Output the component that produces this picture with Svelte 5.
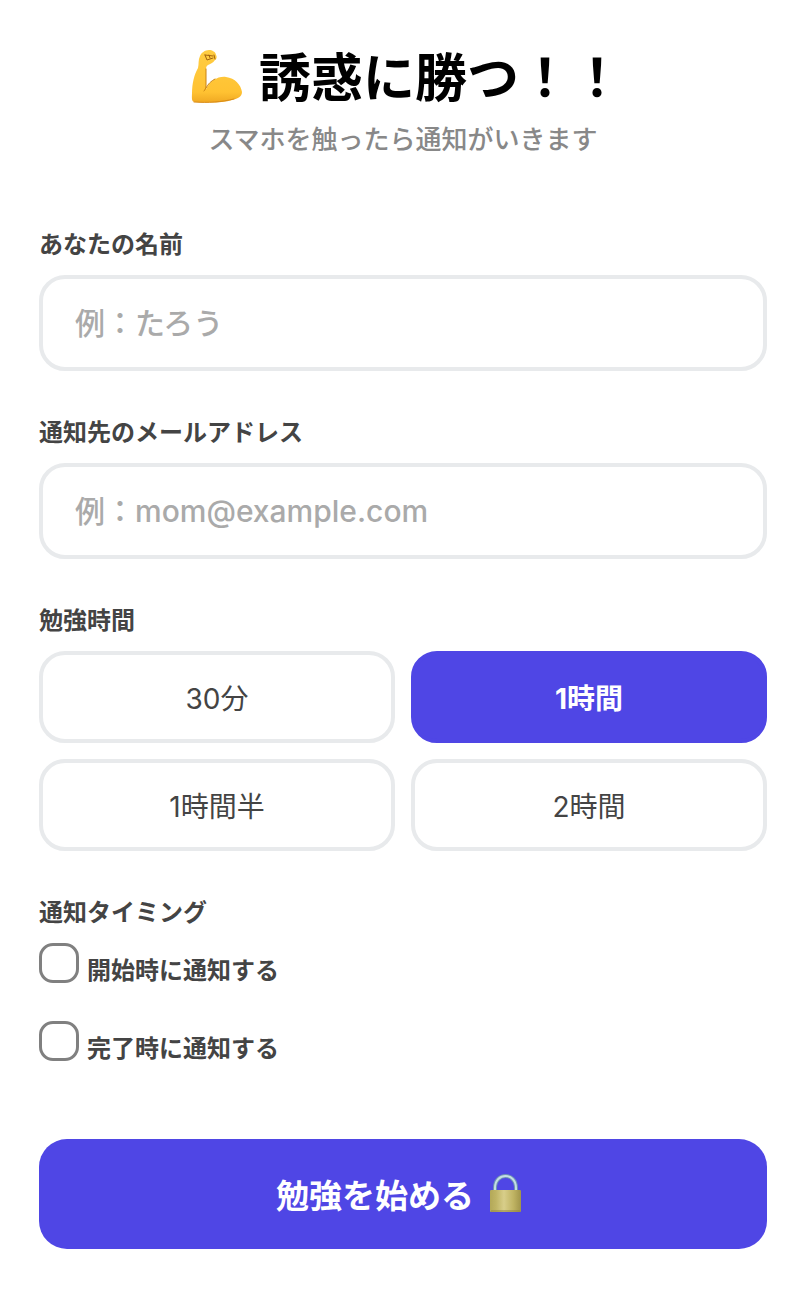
<script lang="ts">
  const durations = [
    { minutes: 30, label: "30分" },
    { minutes: 60, label: "1時間" },
    { minutes: 90, label: "1時間半" },
    { minutes: 120, label: "2時間" },
  ];

  let name = $state("");
  let email = $state("");
  let selected = $state(60);
  let notifyStart = $state(false);
  let notifyEnd = $state(false);
</script>

<main class="page">
  <header class="header">
    <h1 class="title">
      <svg class="muscle" viewBox="-7 2 60 56" aria-hidden="true">
        <defs>
          <linearGradient id="skin" x1="0" y1="0" x2="0" y2="1">
            <stop offset="0" stop-color="#ffcd42" />
            <stop offset="0.8" stop-color="#ffc232" />
            <stop offset="1" stop-color="#f0a822" />
          </linearGradient>
        </defs>
        <path
          d="M10 7 C11 4 15 1 19 1 C22 1 26 3 26 6 C27 7 27 10 25 11 C23 14 20 15 18 16 C16 17 16 19 16 22 L16 40 C20 32 28 27 36 28 C45 29 51 36 52 43 C52 48 47 50 42 51 C33 54 18 54 5 53 C1 53 2 48 2 44 C2 35 4 26 8 19 C9 15 8 11 10 7 Z"
          fill="url(#skin)"
        />
        <path
          d="M16 20 L16 37 C16 39 15 41 14 42 M16 39 C18 35 21 32 25 30"
          fill="none"
          stroke="#c98212"
          stroke-width="1"
          stroke-linecap="round"
        />
        <path
          d="M15 6 L23 7 M15 6 L17 11 L23 9 M19 6 L20 9 M24 6 L25 10"
          fill="none"
          stroke="#a3650f"
          stroke-width="1"
          stroke-linejoin="round"
          stroke-linecap="round"
        />
        <path
          d="M4 53 C18 54 32 53 44 50"
          fill="none"
          stroke="#d98c18"
          stroke-width="1"
          stroke-linecap="round"
        />
      </svg>
      <span>誘惑に勝つ！！</span>
    </h1>
    <p class="subtitle">スマホを触ったら通知がいきます</p>
  </header>

  <form class="form" onsubmit={(e) => e.preventDefault()}>
    <div class="group">
      <label class="label" for="name">あなたの名前</label>
      <input id="name" class="text-input" type="text" placeholder="例：たろう" bind:value={name} />
    </div>

    <div class="group">
      <label class="label" for="email">通知先のメールアドレス</label>
      <input
        id="email"
        class="text-input"
        type="email"
        placeholder="例：mom@example.com"
        bind:value={email}
      />
    </div>

    <div class="group" role="group" aria-labelledby="duration-label">
      <span class="label" id="duration-label">勉強時間</span>
      <div class="durations">
        {#each durations as d (d.minutes)}
          <button
            type="button"
            class="duration"
            class:selected={selected === d.minutes}
            aria-pressed={selected === d.minutes}
            onclick={() => (selected = d.minutes)}
          >
            {d.label}
          </button>
        {/each}
      </div>
    </div>

    <div class="group" role="group" aria-labelledby="timing-label">
      <span class="label" id="timing-label">通知タイミング</span>
      <div class="checks">
        <label class="check">
          <input type="checkbox" bind:checked={notifyStart} />
          <span>開始時に通知する</span>
        </label>
        <label class="check">
          <input type="checkbox" bind:checked={notifyEnd} />
          <span>完了時に通知する</span>
        </label>
      </div>
    </div>

    <button type="submit" class="submit">
      <span>勉強を始める</span>
      <svg class="lock" viewBox="0 0 42 40" aria-hidden="true">
        <defs>
          <linearGradient id="brass" x1="0" y1="0" x2="1" y2="0">
            <stop offset="0" stop-color="#b3a858" />
            <stop offset="0.2" stop-color="#c0b565" />
            <stop offset="0.45" stop-color="#d8ce8a" />
            <stop offset="0.75" stop-color="#c0b463" />
            <stop offset="1" stop-color="#a0944a" />
          </linearGradient>
        </defs>
        <path d="M7 18 V14 C7 -2 28 -2 28 14 V18" fill="none" stroke="#6e93b4" stroke-width="4" />
        <path d="M7 18 V14 C7 -2 28 -2 28 14 V18" fill="none" stroke="#c3dde4" stroke-width="2" />
        <rect x="2" y="16" width="31" height="22" rx="1" fill="url(#brass)" />
        <path d="M3 37 H32" stroke="#8d8242" stroke-width="1" />
      </svg>
    </button>
  </form>
</main>

<style>
  :global(body) {
    margin: 0;
    background: #fff;
  }

  .page {
    box-sizing: border-box;
    padding: 47px 41px 47px 39px;
    font-family: Inter, "Noto Sans CJK JP", sans-serif;
    color: #444;
  }

  .header {
    margin-bottom: 72px;
    text-align: center;
  }

  .title {
    display: flex;
    align-items: center;
    justify-content: center;
    gap: 16px;
    margin: 0 0 13px;
    font-size: 52px;
    font-weight: 700;
    line-height: 64px;
    color: #000;
  }

  .muscle {
    flex-shrink: 0;
    width: 60px;
    height: 56px;
    overflow: visible;
  }

  .subtitle {
    margin: 0;
    font-size: 26px;
    font-weight: 500;
    line-height: 32px;
    color: #888;
  }

  .form {
    display: flex;
    flex-direction: column;
    gap: 45px;
  }

  .group {
    display: flex;
    flex-direction: column;
    gap: 13px;
  }

  .label {
    font-size: 24px;
    font-weight: 700;
    line-height: 34px;
  }

  .text-input {
    box-sizing: border-box;
    width: 100%;
    height: 96px;
    padding: 0 32px;
    border: 4px solid #e8eaec;
    border-radius: 26px;
    background: #fff;
    font-family: inherit;
    font-size: 30px;
    font-weight: 500;
    color: #444;
  }

  .text-input::placeholder {
    color: #aaa;
    opacity: 1;
  }

  .text-input:focus {
    border-color: #4f46e5;
    outline: none;
  }

  .durations {
    display: grid;
    grid-template-columns: 1fr 1fr;
    gap: 16px;
  }

  .duration {
    height: 92px;
    padding: 0;
    border: 4px solid #e8eaec;
    border-radius: 26px;
    background: #fff;
    font-family: inherit;
    font-size: 28px;
    color: #444;
    cursor: pointer;
  }

  .duration.selected {
    border-color: #4f46e5;
    background: #4f46e5;
    font-weight: 700;
    color: #fff;
  }

  .checks {
    display: flex;
    flex-direction: column;
    align-items: flex-start;
    gap: 38px;
  }

  .check {
    display: flex;
    align-items: flex-end;
    gap: 8px;
    font-size: 24px;
    font-weight: 700;
    line-height: 24px;
    cursor: pointer;
  }

  .check input {
    appearance: none;
    box-sizing: border-box;
    width: 40px;
    height: 40px;
    margin: 0;
    border: 3px solid #808080;
    border-radius: 14px;
    background: #fff;
  }

  .check input:checked {
    border-color: #4f46e5;
    background: #4f46e5;
  }

  .submit {
    display: flex;
    align-items: center;
    justify-content: center;
    gap: 14px;
    height: 110px;
    margin-top: 33px;
    padding: 0;
    border: none;
    border-radius: 28px;
    background: #4f46e5;
    font-family: inherit;
    font-size: 33px;
    font-weight: 700;
    color: #fff;
    cursor: pointer;
  }

  .lock {
    width: 42px;
    height: 40px;
  }
</style>
